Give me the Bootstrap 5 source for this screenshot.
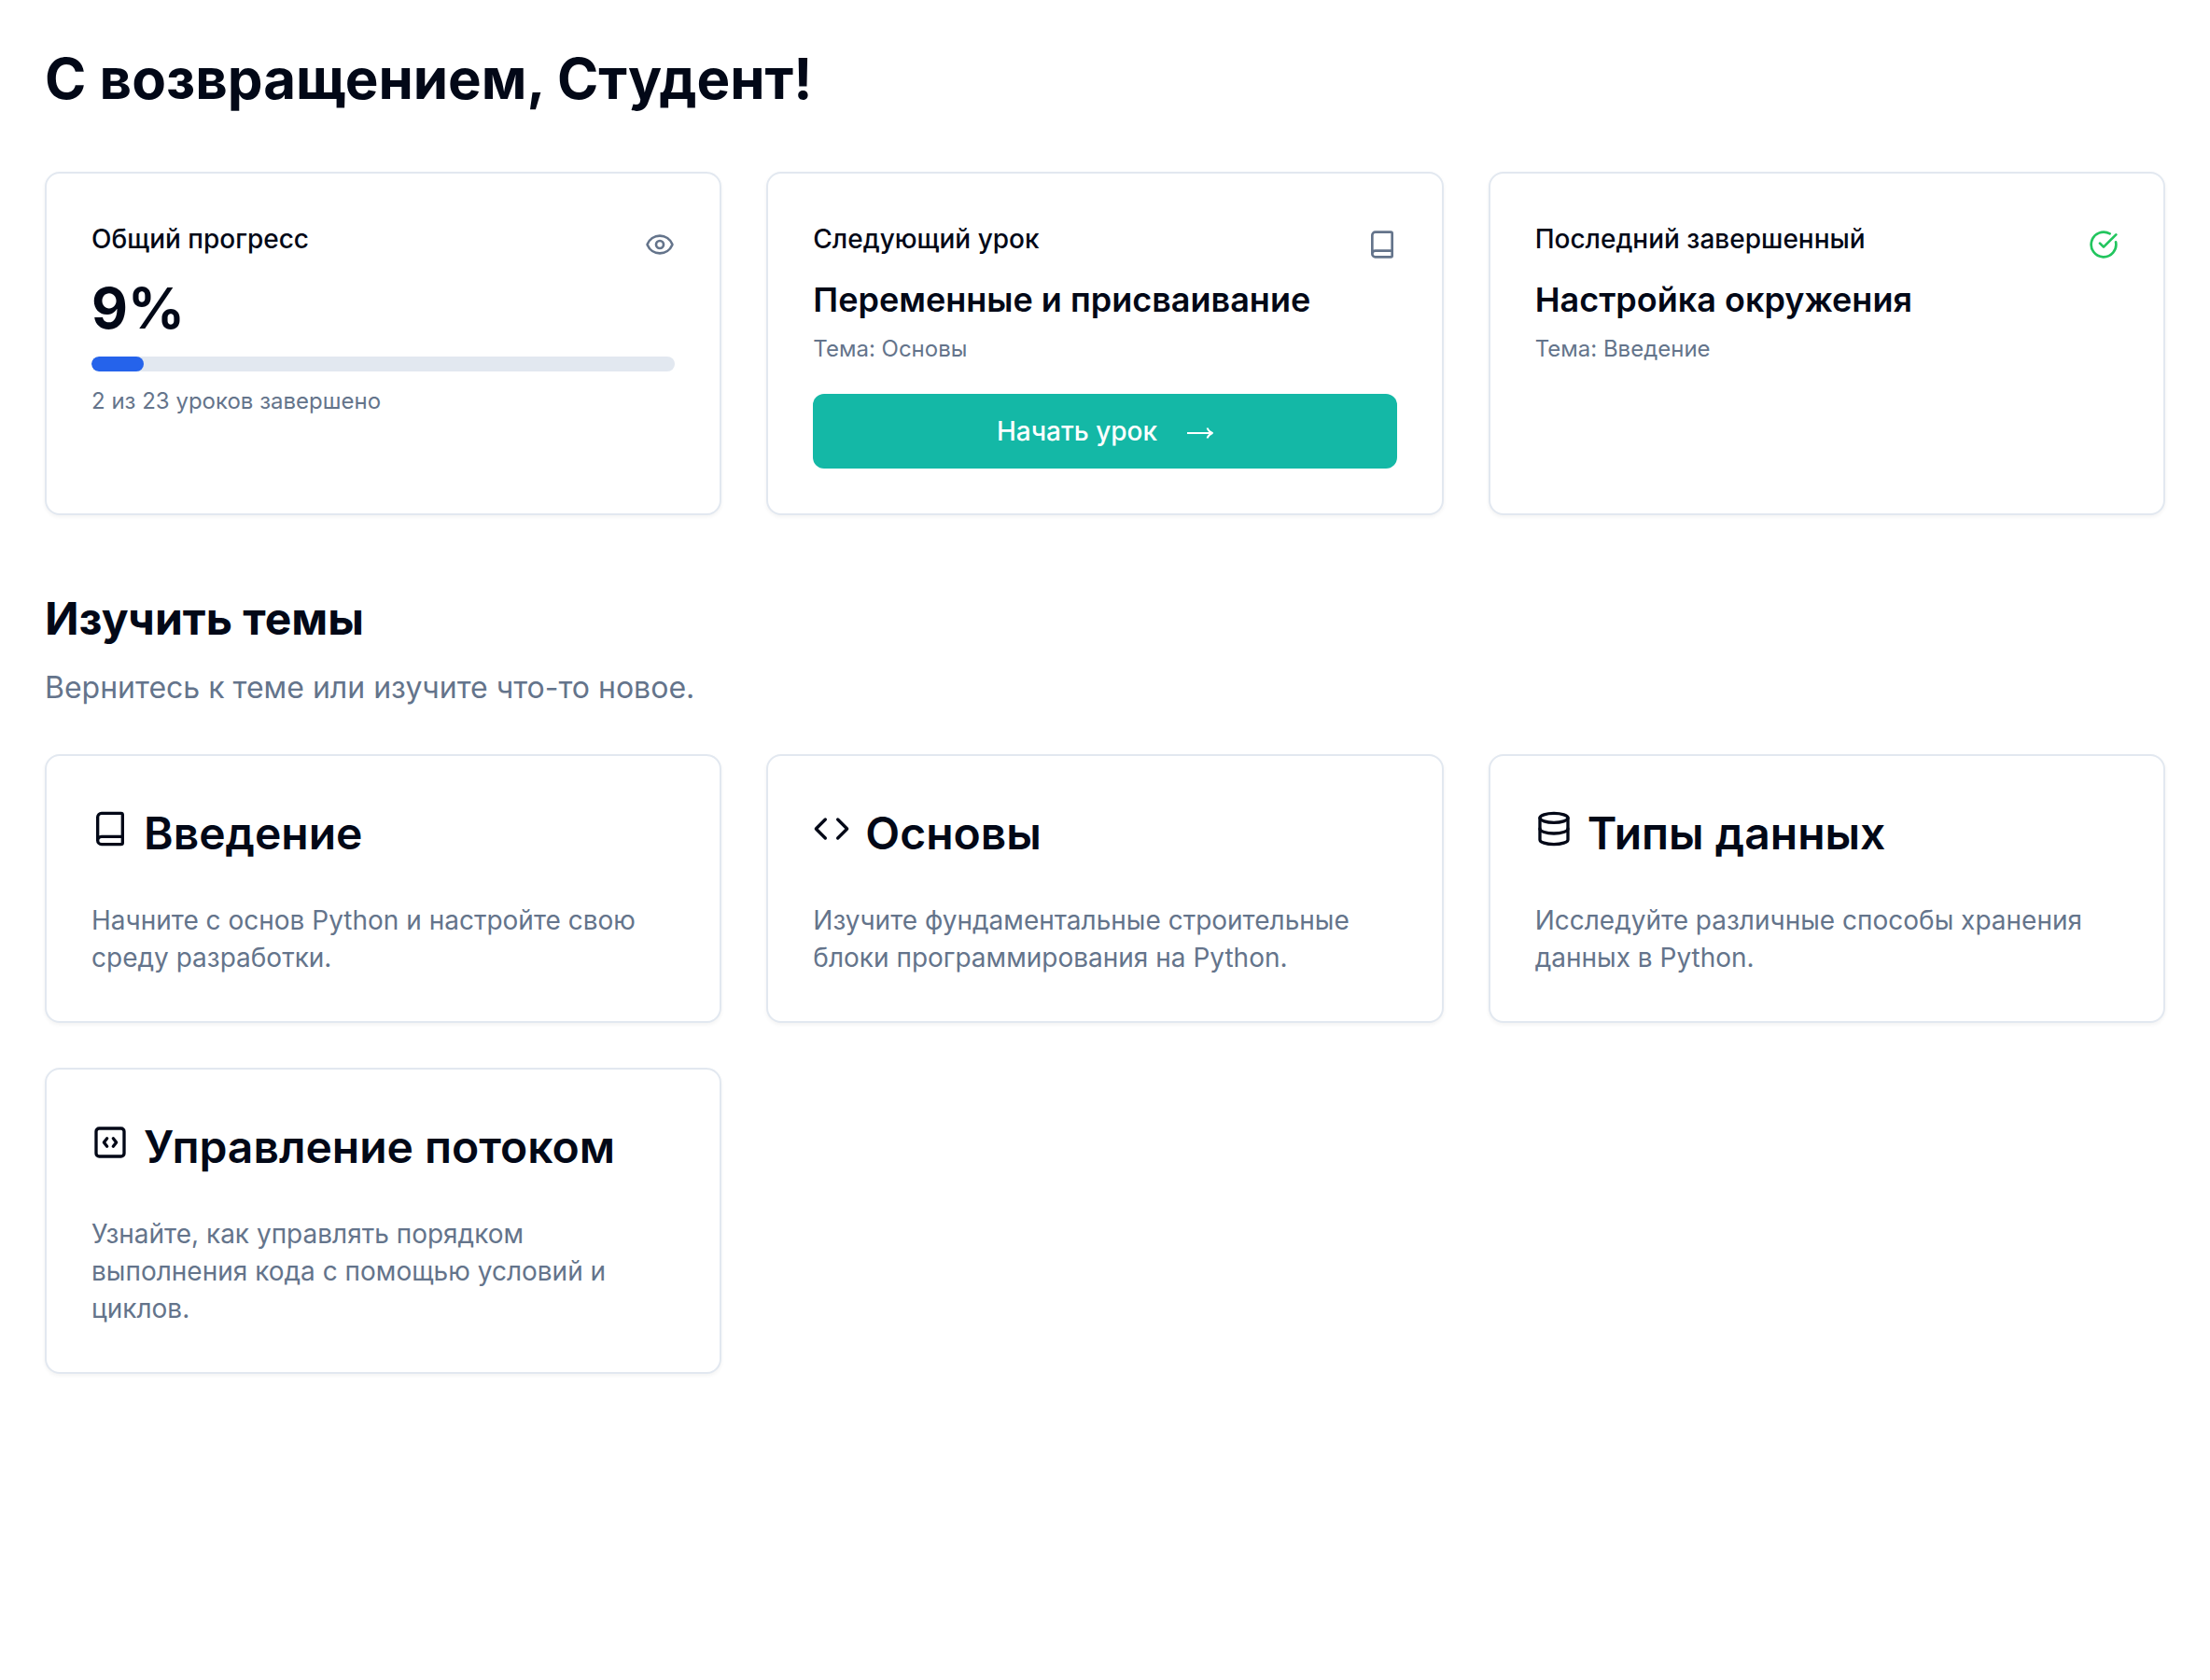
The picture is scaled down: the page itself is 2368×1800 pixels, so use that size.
<!DOCTYPE html>
<html lang="ru">
<head>
<meta charset="utf-8">
<meta name="viewport" content="width=device-width, initial-scale=1">
<title>Обучение Python</title>
<link href="https://cdn.jsdelivr.net/npm/bootstrap@5.3.0/dist/css/bootstrap.min.css" rel="stylesheet">
<style>
  :root { --ink: #020817; --muted: #64748b; --line: #e2e8f0; }
  body { font-family: Inter, "Noto Sans", sans-serif; font-size: 28px; line-height: 40px; color: var(--ink); background: #fff; }
  .page { padding: 48px; }
  .page-title { font-size: 60px; line-height: 72px; font-weight: 700; margin-bottom: 64px; }
  .tiles { --bs-gutter-x: 48px; --bs-gutter-y: 48px; }
  .tile { border: 2px solid var(--line); border-radius: 16px; box-shadow: 0 2px 4px rgba(0, 0, 0, .05); color: var(--ink); }
  .tile > .card-body { padding: 48px; }
  .tile-head { padding-bottom: 16px; }
  .tile-label { font-size: 28px; line-height: 28px; font-weight: 500; }
  .icon-sm { width: 32px; height: 32px; margin-top: 12px; }
  .icon-md { width: 40px; height: 40px; }
  .icon-arrow { width: 28px; height: 16px; }
  .stroke-icon { flex: none; fill: none; stroke: currentColor; stroke-width: 2; stroke-linecap: round; stroke-linejoin: round; }
  .quiet { color: var(--muted); }
  .done { color: #22c55e; }
  .stat { font-size: 60px; line-height: 72px; font-weight: 700; }
  .lesson { font-size: 36px; line-height: 54px; font-weight: 600; margin-bottom: 10px; }
  .note { font-size: 24px; line-height: 32px; color: var(--muted); }
  .meter { height: 16px; border-radius: 16px; margin: 16px 0; background: var(--line); }
  .meter .progress-bar { background: #2563eb; border-radius: 16px; }
  .btn-start { --bs-btn-color: #fff; --bs-btn-bg: #14b8a6; --bs-btn-hover-color: #fff; --bs-btn-hover-bg: #0d9488; height: 80px; margin-top: 32px; border: 0; border-radius: 12px; font-size: 28px; line-height: 40px; font-weight: 500; gap: 32px; }
  .topics { margin-top: 80px; }
  .section-title { font-size: 48px; line-height: 62px; font-weight: 700; margin-bottom: 18px; }
  .section-text { font-size: 32px; line-height: 50px; color: var(--muted); margin-bottom: 46px; }
  .topic-head { gap: 16px; margin-bottom: 48px; }
  .topic-title { font-size: 48px; line-height: 50px; font-weight: 600; padding-top: 10px; }
</style>
<script src="https://cdn.jsdelivr.net/npm/bootstrap@5.3.0/dist/js/bootstrap.bundle.min.js" defer></script>
</head>
<body>
<main class="page container-fluid">
  <h1 class="page-title">С возвращением, Студент!</h1>

  <section class="row row-cols-1 row-cols-lg-3 tiles">
    <div class="col">
      <article class="card tile h-100">
        <div class="card-body">
          <div class="tile-head d-flex justify-content-between align-items-center">
            <h2 class="tile-label mb-0">Общий прогресс</h2>
            <svg class="stroke-icon icon-sm quiet" viewBox="0 0 24 24" aria-hidden="true"><path d="M2.062 12.348a1 1 0 0 1 0-.696 10.75 10.75 0 0 1 19.876 0 1 1 0 0 1 0 .696 10.75 10.75 0 0 1-19.876 0"/><circle cx="12" cy="12" r="3"/></svg>
          </div>
          <div class="stat">9%</div>
          <div class="progress meter" role="progressbar" aria-label="Общий прогресс" aria-valuenow="9" aria-valuemin="0" aria-valuemax="100">
            <div class="progress-bar" style="width: 9%"></div>
          </div>
          <p class="note mb-0">2 из 23 уроков завершено</p>
        </div>
      </article>
    </div>
    <div class="col">
      <article class="card tile h-100">
        <div class="card-body">
          <div class="tile-head d-flex justify-content-between align-items-center">
            <h2 class="tile-label mb-0">Следующий урок</h2>
            <svg class="stroke-icon icon-sm quiet" viewBox="0 0 24 24" aria-hidden="true"><path d="M4 19.5v-15A2.5 2.5 0 0 1 6.5 2H19a1 1 0 0 1 1 1v18a1 1 0 0 1-1 1H6.5a1 1 0 0 1 0-5H20"/></svg>
          </div>
          <h3 class="lesson">Переменные и присваивание</h3>
          <p class="note mb-0">Тема: Основы</p>
          <button type="button" class="btn btn-start w-100 d-flex justify-content-center align-items-center">
            <span>Начать урок</span>
            <svg class="icon-arrow" viewBox="0 0 28 16" fill="none" stroke="currentColor" stroke-width="2" stroke-linejoin="round" aria-hidden="true"><path d="M0 10h26"/><path d="M21.500 4.500c1 2.500 3 4.500 5.500 5.500-2.500 1-4.500 3-5.500 5.500"/></svg>
          </button>
        </div>
      </article>
    </div>
    <div class="col">
      <article class="card tile h-100">
        <div class="card-body">
          <div class="tile-head d-flex justify-content-between align-items-center">
            <h2 class="tile-label mb-0">Последний завершенный</h2>
            <svg class="stroke-icon icon-sm done" viewBox="0 0 24 24" aria-hidden="true"><path d="M21.801 10A10 10 0 1 1 17 3.335"/><path d="m9 11 3 3L22 4"/></svg>
          </div>
          <h3 class="lesson">Настройка окружения</h3>
          <p class="note mb-0">Тема: Введение</p>
        </div>
      </article>
    </div>
  </section>

  <section class="topics">
    <h2 class="section-title">Изучить темы</h2>
    <p class="section-text">Вернитесь к теме или изучите что-то новое.</p>
    <div class="row row-cols-1 row-cols-lg-3 tiles">
      <div class="col">
        <a href="#intro" class="card tile h-100 text-decoration-none">
          <div class="card-body">
            <div class="topic-head d-flex align-items-center">
              <svg class="stroke-icon icon-md" viewBox="0 0 24 24" aria-hidden="true"><path d="M4 19.5v-15A2.5 2.5 0 0 1 6.5 2H19a1 1 0 0 1 1 1v18a1 1 0 0 1-1 1H6.5a1 1 0 0 1 0-5H20"/></svg>
              <h3 class="topic-title mb-0">Введение</h3>
            </div>
            <p class="quiet mb-0">Начните с основ Python и настройте свою среду разработки.</p>
          </div>
        </a>
      </div>
      <div class="col">
        <a href="#basics" class="card tile h-100 text-decoration-none">
          <div class="card-body">
            <div class="topic-head d-flex align-items-center">
              <svg class="stroke-icon icon-md" viewBox="0 0 24 24" aria-hidden="true"><path d="m16 18 6-6-6-6"/><path d="m8 6-6 6 6 6"/></svg>
              <h3 class="topic-title mb-0">Основы</h3>
            </div>
            <p class="quiet mb-0">Изучите фундаментальные строительные блоки программирования на Python.</p>
          </div>
        </a>
      </div>
      <div class="col">
        <a href="#types" class="card tile h-100 text-decoration-none">
          <div class="card-body">
            <div class="topic-head d-flex align-items-center">
              <svg class="stroke-icon icon-md" viewBox="0 0 24 24" aria-hidden="true"><ellipse cx="12" cy="5" rx="9" ry="3"/><path d="M3 5v14a9 3 0 0 0 18 0V5"/><path d="M3 12a9 3 0 0 0 18 0"/></svg>
              <h3 class="topic-title mb-0">Типы данных</h3>
            </div>
            <p class="quiet mb-0">Исследуйте различные способы хранения данных в Python.</p>
          </div>
        </a>
      </div>
      <div class="col">
        <a href="#flow" class="card tile h-100 text-decoration-none">
          <div class="card-body">
            <div class="topic-head d-flex align-items-center">
              <svg class="stroke-icon icon-md" viewBox="0 0 24 24" aria-hidden="true"><path d="m10 9.5-2 2.5 2 2.5"/><path d="m14 9.5 2 2.5-2 2.5"/><rect x="3" y="3" width="18" height="18" rx="2"/></svg>
              <h3 class="topic-title mb-0">Управление потоком</h3>
            </div>
            <p class="quiet mb-0">Узнайте, как управлять порядком выполнения кода с помощью условий и циклов.</p>
          </div>
        </a>
      </div>
    </div>
  </section>
</main>
</body>
</html>
